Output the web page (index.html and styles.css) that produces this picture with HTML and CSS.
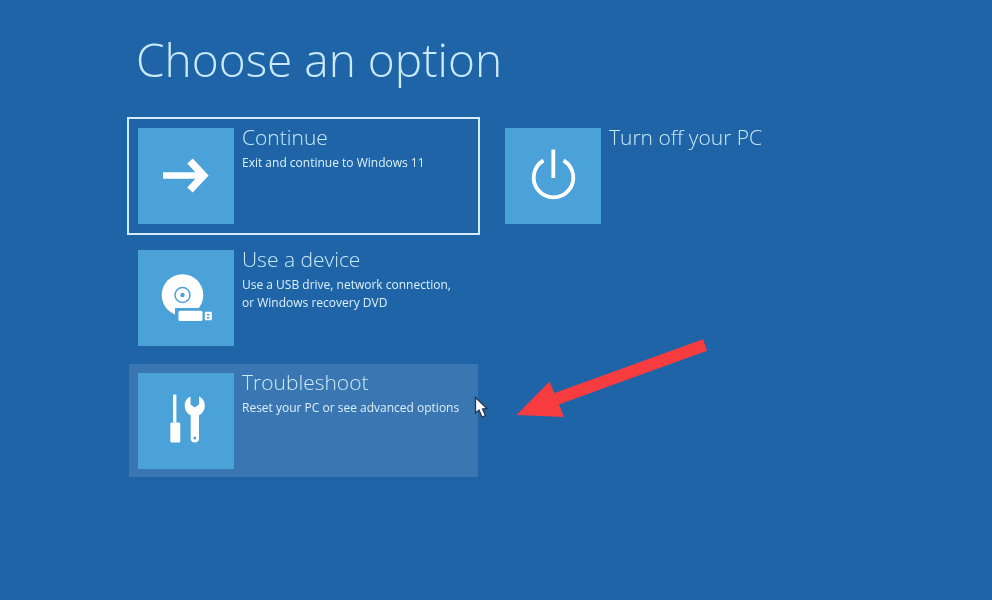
FILE: index.html
```html
<!DOCTYPE html>
<html lang="en">
<head>
  <meta charset="UTF-8">
  <meta name="viewport" content="width=device-width, initial-scale=1.0">
  <title>Choose an option</title>
  <link rel="stylesheet" href="styles.css">
</head>
<body>
  <main class="screen">
    <h1 class="heading">Choose an option</h1>

    <div class="columns">
      <div class="column">
        <!-- Continue -->
        <div class="option selected">
          <div class="tile">
            <svg viewBox="0 0 96 96" class="icon">
              <path d="M25 47.5H65" fill="none" stroke="#fff" stroke-width="6.5"/>
              <path d="M52 33L65.5 47.5L52 62" fill="none" stroke="#fff" stroke-width="7.5"/>
            </svg>
          </div>
          <div class="option-text">
            <div class="option-title">Continue</div>
            <div class="option-desc">Exit and continue to Windows 11</div>
          </div>
        </div>

        <!-- Use a device -->
        <div class="option">
          <div class="tile">
            <svg viewBox="0 0 96 96" class="icon">
              <circle cx="44.500" cy="45" r="20.800" fill="#fff"/>
              <circle cx="44.500" cy="45" r="7.500" fill="none" stroke="#4ba2d8" stroke-width="1.500"/>
              <circle cx="44.500" cy="45" r="2.200" fill="#4ba2d8"/>
              <rect x="37" y="58" width="40" height="16" fill="#4ba2d8"/>
              <rect x="40.500" y="60.700" width="24" height="10.300" rx="1.500" fill="#fff"/>
              <rect x="66.800" y="61.700" width="7" height="8.600" rx="1" fill="#fff"/>
              <rect x="69" y="64" width="2.400" height="1.600" fill="#4ba2d8"/>
              <rect x="69" y="67" width="2.400" height="1.600" fill="#4ba2d8"/>
            </svg>
          </div>
          <div class="option-text">
            <div class="option-title">Use a device</div>
            <div class="option-desc">Use a USB drive, network connection,<br>or Windows recovery DVD</div>
          </div>
        </div>

        <!-- Troubleshoot -->
        <div class="option hovered">
          <div class="tile">
            <svg viewBox="0 0 96 96" class="icon">
              <rect x="35" y="21.500" width="3.400" height="28" rx="1" fill="#fff"/>
              <rect x="32.300" y="49.500" width="10" height="20" rx="1.500" fill="#fff"/>
              <path fill="#fff" d="M52.500 23.500V31.500L56.700 34.500L61 31.500V23.500C64.500 25 66.800 28.500 66.800 32.500C66.800 37 64.500 40.500 61 42.300V66C61 68 59 69.600 56.800 69.600C54.600 69.600 52.700 68 52.700 66V42.300C49 40.500 46.700 37 46.700 32.500C46.700 28.500 49 25 52.500 23.500Z"/>
              <circle cx="56.800" cy="65" r="1.500" fill="#4ba2d8"/>
            </svg>
          </div>
          <div class="option-text">
            <div class="option-title">Troubleshoot</div>
            <div class="option-desc">Reset your PC or see advanced options</div>
          </div>
        </div>
      </div>

      <div class="column">
        <!-- Turn off -->
        <div class="option">
          <div class="tile">
            <svg viewBox="0 0 96 96" class="icon">
              <path d="M38.500 32.500A19.800 19.800 0 1 0 58.500 32.500" fill="none" stroke="#fff" stroke-width="3.800"/>
              <path d="M48.300 21.500V50" fill="none" stroke="#fff" stroke-width="3.800"/>
            </svg>
          </div>
          <div class="option-text">
            <div class="option-title">Turn off your PC</div>
          </div>
        </div>
      </div>
    </div>
  </main>

  <!-- Annotation and mouse pointer sit on top of the screen -->
  <svg class="annotation" viewBox="0 0 992 600">
    <path d="M705 345L556 399" fill="none" stroke="#f73c40" stroke-width="12"/>
    <path d="M516.500 415L549.500 381.500L564 417Z" fill="#f73c40"/>
    <path d="M475.500 397.500V413L479 410L482 417L485.500 415.500L482.500 409L487 408.500Z" fill="#fff" stroke="#26384e" stroke-width="1.300"/>
  </svg>
</body>
</html>
```

FILE: styles.css
```css
body {
  margin: 0;
  background-color: #2064a8;
  font-family: "Open Sans", "Liberation Sans", sans-serif;
  overflow: hidden;
}

/* source is a video frame, everything is a little soft */
.screen {
  width: 992px;
  height: 600px;
  box-sizing: border-box;
  padding: 29px 0 0 127px;
  filter: blur(0.4px);
}

.heading {
  margin: 0 0 28px 9px;
  height: 60px;
  font-size: 46px;
  line-height: 60px;
  font-weight: 300;
  color: #c9eaf9;
}

.columns {
  display: flex;
  gap: 14px;
}

.option {
  display: flex;
  gap: 8px;
  width: 353px;
  height: 118px;
  box-sizing: border-box;
  padding: 9px;
  border: 2px solid transparent;
  background-clip: padding-box;
}

.option + .option {
  margin-top: 4px;
}

.option.selected {
  border-color: #d4eaf6;
}

.option.hovered {
  margin-top: 5px;
  height: 117px;
  background-color: #3a76b1;
}

.tile {
  flex: none;
  width: 96px;
  height: 96px;
  background-color: #4ba2d8;
}

.icon {
  display: block;
  width: 96px;
  height: 96px;
}

.option-text {
  margin-top: -2px;
}

.option-title {
  font-size: 21px;
  line-height: 22px;
  font-weight: 300;
  color: #c9eaf9;
}

.option-desc {
  margin-top: 6px;
  font-size: 12px;
  line-height: 18px;
  color: #dcf0fa;
}

.annotation {
  position: absolute;
  left: 0;
  top: 0;
  width: 992px;
  height: 600px;
}
```
